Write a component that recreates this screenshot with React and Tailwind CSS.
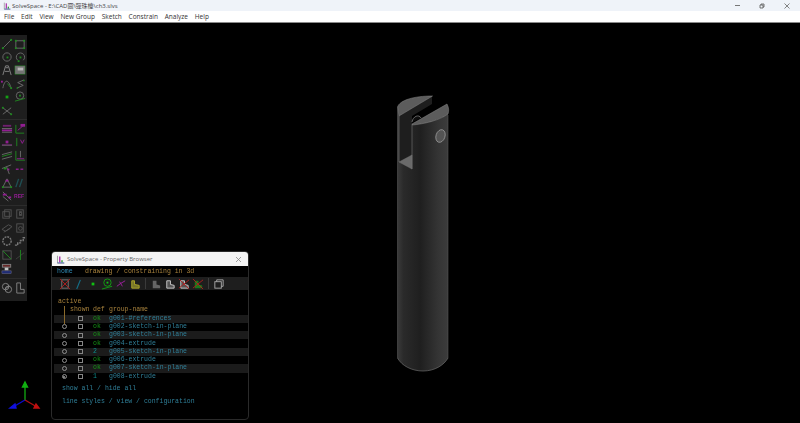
const menus = ['File', 'Edit', 'View', 'New Group', 'Sketch', 'Constrain', 'Analyze', 'Help'];

const groups = [
  { name: 'g001-#references', def: 'ok', radio: false, stripe: true },
  { name: 'g002-sketch-in-plane', def: 'ok', radio: true },
  { name: 'g003-sketch-in-plane', def: 'ok', radio: true, stripe: true },
  { name: 'g004-extrude', def: 'ok', radio: true },
  { name: 'g005-sketch-in-plane', def: '2', radio: true, stripe: true, cyan: true },
  { name: 'g006-extrude', def: 'ok', radio: true },
  { name: 'g007-sketch-in-plane', def: 'ok', radio: true, stripe: true },
  { name: 'g008-extrude', def: '1', radio: true, active: true, cyan: true },
];

const G = '#7f7f7f';
const L = '#1fa31f';
const M = '#b01fb0';

const Ic = ({ children }) => (
  <svg width="12" height="12" viewBox="0 0 13 13" fill="none" strokeWidth="1">
    {children}
  </svg>
);

const toolA = [
  <><path d="M2 11L11 2" stroke={G} /><rect x="1" y="10" width="2" height="2" fill={L} /><rect x="10" y="1" width="2" height="2" fill={L} /></>,
  <><rect x="2" y="3" width="9" height="8" stroke={G} /><rect x="1" y="2" width="2" height="2" fill={L} /><rect x="10" y="2" width="2" height="2" fill={L} /><rect x="1" y="10" width="2" height="2" fill={L} /><rect x="10" y="10" width="2" height="2" fill={L} /></>,
  <><circle cx="6.5" cy="6.5" r="4.5" stroke={G} /><rect x="6" y="6" width="2" height="2" fill={L} /></>,
  <><path d="M4 10A4.5 4.5 0 1 1 10 10" stroke={G} /><rect x="6" y="6" width="2" height="2" fill={L} /><rect x="4" y="10" width="2" height="2" fill={L} /></>,
  <><path d="M2 12L5 2H8L11 12M4 8H9M5 4H8" stroke="#a0a0a0" /></>,
  <><rect x="1" y="2" width="11" height="9" fill="#8a8a8a" stroke={L} strokeWidth="0.5" /><rect x="4" y="4" width="6" height="3" fill="#dddddd" /></>,
  <><path d="M2 11C4 1 8 1 11 11" stroke={G} /><rect x="0" y="3" width="2" height="2" fill={M} /><rect x="10" y="10" width="2" height="2" fill={L} /><path d="M7 6L10 10" stroke={L} /></>,
  <><path d="M3 11L10 8L4 5L11 2" stroke={G} /><rect x="3" y="10" width="1.5" height="1.5" fill={L} /><rect x="10" y="2" width="1.5" height="1.5" fill={L} /></>,
  <><rect x="5" y="5" width="3" height="3" fill="#12c012" /></>,
  <><circle cx="6.5" cy="5" r="4" stroke={G} /><rect x="5.5" y="4" width="2" height="2" fill={L} /><path d="M1 11L12 8" stroke={L} /></>,
  <><path d="M2 3L11 10M2 10L11 3" stroke={G} /><rect x="1" y="2" width="2" height="2" fill={L} /><rect x="10" y="9" width="2" height="2" fill={L} /></>,
];

const toolB = [
  <><path d="M1 6H12M1 10H12" stroke={G} /><rect x="1" y="7" width="11" height="2" fill={M} /><rect x="2" y="2" width="9" height="2" fill={M} opacity="0.7" /></>,
  <><path d="M2 2V11H11" stroke={L} /><path d="M4 8L11 2" stroke={M} /><rect x="7" y="1" width="5" height="3" fill={M} /></>,
  <><path d="M1 10H12" stroke={G} /><rect x="5" y="5" width="3" height="3" fill={M} /><rect x="1" y="9" width="11" height="1" fill={M} opacity="0.6" /></>,
  <><path d="M3 2V11" stroke={L} /><path d="M7 4L9 8L11 4" stroke={M} /></>,
  <><path d="M1 5L12 2M1 10L12 7" stroke={G} /><path d="M1 7L12 4" stroke={L} /></>,
  <><path d="M2 1V11H12" stroke={L} /><path d="M7 1V8" stroke={G} /><rect x="3" y="9" width="8" height="1" fill={M} /></>,
  <><path d="M1 6L11 2M6 4L9 12" stroke={G} /><rect x="3" y="5" width="3" height="2" fill={L} /><rect x="7" y="6" width="2" height="2" fill={M} /></>,
  <><rect x="2" y="6" width="3" height="1.5" fill={M} /><rect x="7" y="6" width="3" height="1.5" fill={M} /></>,
  <><path d="M2 11L6.5 2L11 11Z" stroke={G} /><rect x="5" y="3" width="3" height="2" fill={M} /><rect x="1" y="10" width="2" height="2" fill={L} /><rect x="10" y="10" width="2" height="2" fill={L} /></>,
  <><path d="M2 11L5 2M6 11L9 2" stroke="#1f5a60" strokeWidth="1.5" /></>,
  <><path d="M2 2L11 11M2 7L8 12" stroke={G} /><rect x="2" y="4" width="4" height="2" fill={M} /><rect x="8" y="7" width="3" height="2" fill={M} /></>,
  <><text x="0" y="9" fontSize="5.5" fontFamily="Liberation Sans" fontWeight="700" fill={M}>REF</text></>,
];

const toolC = [
  <><rect x="2" y="4" width="7" height="7" stroke="#5f5f5f" /><rect x="4" y="2" width="7" height="7" stroke="#5f5f5f" /></>,
  <><rect x="3" y="2" width="7" height="9" stroke="#5f5f5f" /><rect x="6" y="4" width="2" height="4" stroke="#5f5f5f" /></>,
  <><path d="M1 8L8 3L12 5L5 10ZM3 11L10 7" stroke="#5f5f5f" /></>,
  <><rect x="3" y="2" width="7" height="9" stroke="#5f5f5f" /><circle cx="7" cy="7" r="2" stroke="#5f5f5f" /></>,
  <><circle cx="6.5" cy="6.5" r="4.5" stroke="#8f8f8f" strokeWidth="1.6" strokeDasharray="2 1" /></>,
  <><path d="M1 11H4V8.5H7V6H10V3H12" stroke="#8f8f8f" strokeWidth="1.5" strokeDasharray="2.5 0.8" /></>,
  <><rect x="2" y="2" width="9" height="9" stroke="#5f5f5f" /><path d="M2 2L11 11" stroke={L} /></>,
  <><path d="M2 11L11 4" stroke="#4a4a4a" /><path d="M7 1V12" stroke={L} /></>,
];

const ToolSep = () => <div className="h-px bg-[#303030] my-[2px]" />;

const ToolGrid = ({ items }) => (
  <div className="grid grid-cols-2 pl-[0.5px]">
    {items.map((icon, i) => (
      <div key={i} className="h-[13.4px] flex items-center justify-center">
        <Ic>{icon}</Ic>
      </div>
    ))}
  </div>
);

const Toolbar = () => (
  <div className="absolute left-0 top-[12px] w-[27px] h-[266px] bg-[#1e1e1e] pt-[2px]">
    <div className="opacity-80 blur-[0.3px]">
      <ToolGrid items={toolA} />
      <ToolSep />
      <ToolGrid items={toolB} />
      <ToolSep />
      <ToolGrid items={toolC} />
      <div className="flex pl-[1px] mt-[1px] h-[13.5px] items-center">
        <svg width="12" height="12" viewBox="0 0 13 13" fill="none">
          <rect x="1.5" y="1.5" width="9" height="3" fill="#7a2a2a" stroke="#999" />
          <rect x="4" y="5" width="4" height="3" fill="#eeeeee" />
          <rect x="1" y="8.5" width="10" height="3" fill="#20308a" stroke="#8888aa" strokeWidth="0.5" />
        </svg>
      </div>
      <ToolSep />
      <div className="grid grid-cols-2 pl-[0.5px]">
        <div className="h-[14px] flex items-center justify-center">
          <Ic><circle cx="5" cy="5" r="3.5" stroke="#a0a0a0" /><circle cx="8" cy="8" r="3.5" stroke="#a0a0a0" /><path d="M4 8L9 4" stroke="#a0a0a0" /></Ic>
        </div>
        <div className="h-[14px] flex items-center justify-center">
          <Ic><path d="M3 1H7V8H11V12H3Z" stroke="#a0a0a0" /></Ic>
        </div>
      </div>
    </div>
  </div>
);

const SolveLogo = ({ size }) => (
  <svg width={size} height={size} viewBox="0 0 12 12" fill="none">
    <path d="M2 1V11H11" stroke="#8a8a8a" strokeWidth="1" />
    <rect x="4" y="2" width="2" height="8" fill="#b040b0" />
    <rect x="7" y="7" width="2" height="3" fill="#3aa03a" />
    <rect x="2" y="10" width="9" height="1" fill="#4060c0" />
  </svg>
);

// faces of the part in the middle of the viewport
const Model = () => (
  <svg className="absolute left-[390px] top-[69px]" width="66" height="290" viewBox="390 92 66 290" fill="none">
    <defs>
      <linearGradient id="body" gradientUnits="userSpaceOnUse" x1="397.5" y1="0" x2="448" y2="0">
        <stop offset="0" stopColor="#3a3a3a" />
        <stop offset="0.12" stopColor="#2a2a2a" />
        <stop offset="0.45" stopColor="#1f1f1f" />
        <stop offset="0.8" stopColor="#343434" />
        <stop offset="1" stopColor="#3c3c3c" />
      </linearGradient>
    </defs>
    <path d="M397.5 107V358C402 366 412 371 423 371C435 371 444 365 448 358V114C440 120 425 124 412 125V169L399 162V116Z" fill="url(#body)" />
    <path d="M399 116L432 96V104L412 116V155L399 162Z" fill="#1e1e1e" />
    <path d="M397.5 107C400 100 414 96 432.5 96L399 116Z" fill="#5c5c5c" stroke="#8a8a8a" strokeWidth="0.5" />
    <path d="M412 124L447 104C449 108 449 111 448 114C440 120 425 124 412 125Z" fill="#5c5c5c" stroke="#8a8a8a" strokeWidth="0.5" />
    <path d="M412 125V169" stroke="#6a6a6a" strokeWidth="0.7" />
    <path d="M399 162L412 155V169Z" fill="#6a6a6a" stroke="#7a7a7a" strokeWidth="0.5" />
    <path d="M399 116V162" stroke="#707070" strokeWidth="0.7" />
    <path d="M412 122C413 116 419 114 421 118" stroke="#8a8a8a" strokeWidth="0.7" fill="#0f0f0f" />
    <ellipse cx="440.5" cy="136" rx="4.5" ry="6.5" transform="rotate(18 440.5 136)" fill="#545454" stroke="#a0a0a0" strokeWidth="0.7" />
    <path d="M397.5 107V358M448 115V358" stroke="#555555" strokeWidth="0.6" />
    <path d="M397.5 358C402 366 412 371 423 371C435 371 444 365 448 358" stroke="#6a6a6a" strokeWidth="0.7" />
  </svg>
);

const Axes = () => (
  <svg className="absolute left-[6px] top-[355px]" width="38" height="36" viewBox="6 378 38 36" fill="none" strokeWidth="1.4">
    <path d="M25 400V384" stroke="#10a010" />
    <path d="M22.5 387L25 382L27.5 387Z" fill="#10b010" stroke="#10b010" />
    <path d="M25 400L13 407" stroke="#0a0ad0" />
    <path d="M10 408L15 404L16 408Z" fill="#1010e0" stroke="#1010e0" />
    <path d="M25 400L37 407" stroke="#b01010" />
    <path d="M39 408L34 408L36 404Z" fill="#c01010" stroke="#c01010" />
  </svg>
);

const BrowserIcons = [
  <><rect x="3" y="2" width="7" height="9" stroke="#777" /><path d="M1 1L12 12M12 1L1 12" stroke="#b02020" /></>,
  <><path d="M4 12L8 2" stroke="#14708a" strokeWidth="1.2" /></>,
  <><rect x="5" y="5" width="3" height="3" fill="#12c012" /></>,
  <><circle cx="7" cy="5" r="4" stroke="#12a012" /><rect x="6" y="4" width="2" height="2" fill="#12c012" /><path d="M1 12L12 9" stroke="#12a012" /></>,
  <><path d="M2 9L6 6L11 3M5 4L8 9" stroke="#a020a0" /></>,
  <><path d="M3 11V3H6V7L11 8V11Z" fill="#77752a" stroke="#b0a828" /></>,
  null,
  <><path d="M3 11V3H7V7L11 8V11Z" fill="#666" /></>,
  <><path d="M3 11V3H7V7L11 8V11Z" fill="#555" stroke="#cccccc" /></>,
  <><path d="M3 11V3H7V7L11 8V11Z" fill="#555" stroke="#cccccc" /><path d="M1 1L12 12M12 2L1 11" stroke="#b02020" /></>,
  <><path d="M3 11V3H7V7L11 8V11Z" fill="#1a7a1a" /><path d="M1 1L12 12M12 2L1 11" stroke="#b02020" /></>,
  null,
  <><rect x="2" y="4" width="7" height="7" stroke="#aaa" /><path d="M4 4V2H11V9H9" stroke="#aaa" /></>,
];

const Row = ({ group }) => (
  <div className={`h-[8.3px] flex items-center ${group.stripe ? 'bg-[#1b1b1b]' : ''}`}>
    <div className="w-[12.5px] flex justify-end">
      {group.radio && (
        <span className="w-[5px] h-[5px] rounded-full border border-[#909090] flex items-center justify-center">
          {group.active && <span className="w-[2px] h-[2px] rounded-full bg-[#a0a0a0]" />}
        </span>
      )}
    </div>
    <div className="w-[16px] flex justify-end">
      <span className="w-[5px] h-[5px] border border-[#858585]" />
    </div>
    <span className={`ml-[10.5px] w-[16px] ${group.cyan ? 'text-[#0c8a8a]' : 'text-[#159015]'}`}>{group.def}</span>
    <span className="text-[#2f7f98]">{group.name}</span>
  </div>
);

const PropertyBrowser = () => (
  <div className="absolute left-[51px] top-[228px] w-[198px] h-[169px] bg-black border border-[#2a2a2a] rounded-[4px] overflow-hidden">
    <div className="h-[14px] bg-[#f4f4f4] flex items-center pl-[4px] pr-[6px] gap-[2px]">
      <SolveLogo size={9} />
      <span className="text-[6px] text-[#666666] font-['Open_Sans',sans-serif]">SolveSpace - Property Browser</span>
      <svg className="ml-auto" width="7" height="7" viewBox="0 0 7 7" stroke="#888888" strokeWidth="0.8">
        <path d="M1 1L6 6M6 1L1 6" />
      </svg>
    </div>
    <div className="font-['Liberation_Mono',monospace] text-[6.5px] leading-[8px] blur-[0.25px]">
      <div className="h-[11px] flex items-center pl-[5px] pt-[1px]">
        <span className="text-[#2f86b0] w-[28px]">home</span>
        <span className="text-[#a8823c]">drawing / constraining in 3d</span>
      </div>
      <div className="h-[13px] bg-[#1e1e1e] flex items-center pl-[6px]">
        {BrowserIcons.map((icon, i) =>
          icon ? (
            <span key={i} className="w-[14px] flex justify-center shrink-0">
              <Ic>{icon}</Ic>
            </span>
          ) : (
            <span key={i} className="w-px h-[11px] bg-[#3a3a3a] mx-[3px] shrink-0" />
          ),
        )}
      </div>
      <div className="pl-[2px] pt-[8px] relative">
        <div className="absolute left-[12px] top-[16px] w-px h-[18px] bg-[#8a6a2c]" />
        <div className="h-[8px] pl-[4px] text-[#a8823c] leading-[8px]">active</div>
        <div className="h-[8.5px] flex items-center text-[#a8823c]">
          <span className="ml-[16px] w-[23px]">shown</span>
          <span className="w-[16px] text-[#a8823c]">def</span>
          <span>group-name</span>
        </div>
        {groups.map((g) => (
          <Row key={g.name} group={g} />
        ))}
        <div className="pl-[8px] mt-[4px] h-[8px] text-[#2f7f98]">show all / hide all</div>
        <div className="pl-[8px] mt-[5px] h-[8px] text-[#2f7f98]">line styles / view / configuration</div>
      </div>
    </div>
  </div>
);

export default function App() {
  return (
    <div className="w-[800px] h-[423px] flex flex-col overflow-hidden bg-black">
      <div className="h-[11px] shrink-0 bg-[#eff3f9] flex items-center pl-[3px]">
        <SolveLogo size={8} />
        <span className="ml-[1px] text-[6px] leading-none text-[#444444] font-['Open_Sans','Noto_Sans_CJK_TC',sans-serif]">
          SolveSpace - E:\CAD圖\彈珠檯\ch3.slvs
        </span>
        <div className="ml-auto flex items-center gap-[19px] pr-[10px]">
          <span className="w-[5px] h-px bg-[#777777]" />
          <svg width="6" height="6" viewBox="0 0 6 6" fill="none" stroke="#555555" strokeWidth="0.8">
            <path d="M1 2H4V5H1ZM2 2V1H5V4H4" />
          </svg>
          <svg width="6" height="6" viewBox="0 0 6 6" stroke="#666666" strokeWidth="0.8">
            <path d="M0.5 0.5L5.5 5.5M5.5 0.5L0.5 5.5" />
          </svg>
        </div>
      </div>
      <div className="h-[12px] shrink-0 bg-white border-b border-[#8a8a8a] flex items-center pl-[4px] gap-[6.8px] text-[6.5px] text-[#333333] font-['Open_Sans',sans-serif]">
        {menus.map((m) => (
          <span key={m}>{m}</span>
        ))}
      </div>
      <div className="relative flex-1 bg-black">
        <Model />
        <Toolbar />
        <Axes />
        <PropertyBrowser />
      </div>
    </div>
  );
}
